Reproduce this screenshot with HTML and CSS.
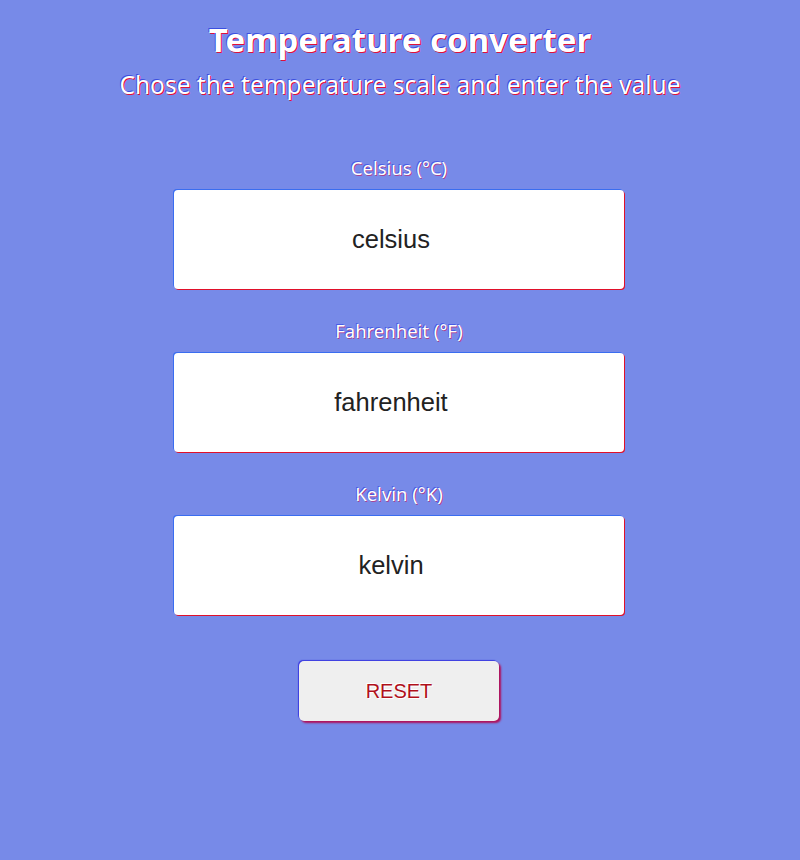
FILE: index.html
```html
<!DOCTYPE html>
<html>
<head>
<meta charset="utf-8">
<link rel="stylesheet" href="styles.css">
</head>
<body>
<main class="app">
  <h1 class="title">Temperature converter</h1>
  <p class="subtitle">Chose the temperature scale and enter the value</p>
  <form class="form">
    <div class="field">
      <label class="label" for="c">Celsius (°C)</label>
      <input class="input" id="c" type="text" placeholder="celsius">
    </div>
    <div class="field">
      <label class="label" for="f">Fahrenheit (°F)</label>
      <input class="input" id="f" type="text" placeholder="fahrenheit">
    </div>
    <div class="field">
      <label class="label" for="k">Kelvin (°K)</label>
      <input class="input" id="k" type="text" placeholder="kelvin">
    </div>
    <button class="reset" type="button">RESET</button>
  </form>
</main>
</body>
</html>
```
FILE: styles.css
```css
html, body {
  margin: 0;
  padding: 0;
  background: #778ae8;
  height: 100%;
}
.app {
  display: flex;
  flex-direction: column;
  align-items: center;
  font-family: "Noto Sans", "Open Sans", sans-serif;
  color: #fff;
  padding-top: 18px;
}
.title {
  margin: 0;
  font-size: 33px;
  font-weight: 700;
  line-height: 44px;
  text-shadow: -1px -1px 0 #3b4fe0, 1px 1px 0 #e0103a;
}
.subtitle {
  margin: 7px 0 0;
  font-size: 24.5px;
  line-height: 32px;
  text-shadow: -1px -1px 0 #3b4fe0, 1px 1px 0 #e0103a;
}
.form {
  display: flex;
  flex-direction: column;
  align-items: center;
  margin-top: 55px;
  padding-right: 2px;
}
.field {
  display: flex;
  flex-direction: column;
  align-items: center;
  margin-bottom: 30px;
}
.label {
  font-size: 18.5px;
  line-height: 24px;
  margin-bottom: 10px;
  text-shadow: -1px -1px 0 rgba(60, 80, 230, 0.8), 1px 1px 0 rgba(200, 20, 90, 0.6);
}
.input {
  box-sizing: border-box;
  width: 450px;
  height: 99px;
  border: none;
  border-radius: 4px;
  background: #fff;
  box-shadow: -1px -1px 0 #3a6df0, 1px 1px 0 #e0102a;
  text-align: center;
  padding: 0 16px 0 0;
  font-family: "Liberation Sans", Arial, sans-serif;
  font-size: 25.5px;
  color: #222;
  outline: none;
}
.input::placeholder {
  color: #222;
  opacity: 1;
}
.reset {
  box-sizing: border-box;
  margin-top: 16px;
  width: 200px;
  height: 60px;
  border: none;
  border-radius: 5px;
  background: #efefef;
  color: #b0101a;
  font-family: "Liberation Sans", Arial, sans-serif;
  font-size: 20px;
  text-shadow: 1px 1px 0 #fff, -1px -1px 0 #fff;
  box-shadow: -1px -1px 1px #3a3ae0, 2px 2px 2px #b0105a;
}
```
